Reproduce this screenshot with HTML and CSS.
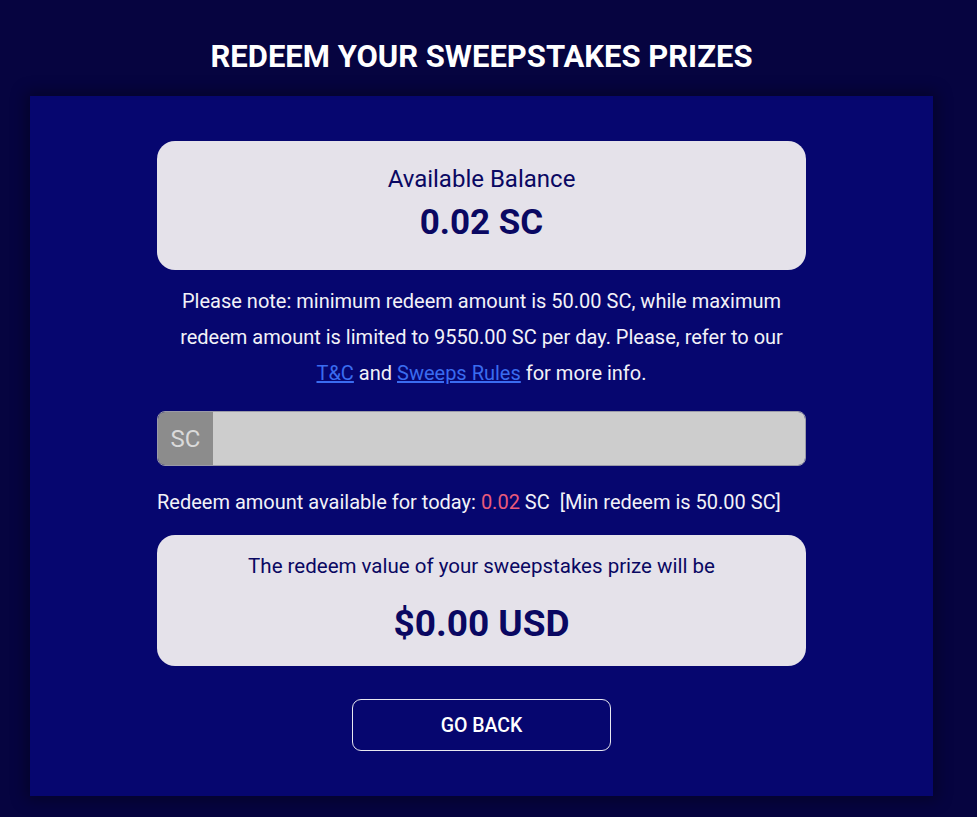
FILE: index.html
```html
<!DOCTYPE html>
<html lang="en">
<head>
    <meta charset="UTF-8">
    <meta name="viewport" content="width=device-width, initial-scale=1.0">
    <title>Redeem Your Sweepstakes Prizes</title>
    <link rel="stylesheet" href="styles.css">
</head>
<body>
    <div class="redeem-page">
        <h1 class="page-title">REDEEM YOUR SWEEPSTAKES PRIZES</h1>

        <div class="redeem-panel">
            <div class="redeem-content">
                <div class="info-card balance-card">
                    <p class="card-label">Available Balance</p>
                    <p class="card-value">0.02 SC</p>
                </div>

                <p class="redeem-note">
                    Please note: minimum redeem amount is 50.00 SC, while maximum<br>
                    redeem amount is limited to 9550.00 SC per day. Please, refer to our<br>
                    <a href="#">T&amp;C</a> and <a href="#">Sweeps Rules</a> for more info.
                </p>

                <div class="amount-field">
                    <span class="amount-prefix">SC</span>
                    <input type="text" class="amount-input" disabled>
                </div>

                <p class="redeem-limit">
                    Redeem amount available for today: <span class="limit-value">0.02</span> SC&nbsp; [Min redeem is 50.00 SC]
                </p>

                <div class="info-card value-card">
                    <p class="card-label small">The redeem value of your sweepstakes prize will be</p>
                    <p class="card-value large">$0.00 USD</p>
                </div>

                <button class="back-button">GO BACK</button>
            </div>
        </div>
    </div>
</body>
</html>
```

FILE: styles.css
```css
* {
    margin: 0;
    padding: 0;
    box-sizing: border-box;
}

body {
    font-family: Roboto, 'Noto Sans', sans-serif;
    background: #060440;
    color: #f2f2f8;
    min-height: 100vh;
}

.redeem-page {
    padding: 38px 44px 20px 30px;
}

.page-title {
    text-align: center;
    font-size: 31px;
    font-weight: 700;
    color: #ffffff;
    line-height: 38px;
    margin-bottom: 20px;
}

.redeem-panel {
    background: #06066f;
    box-shadow: 0 0 14px 4px rgba(0, 0, 0, 0.35);
    height: 700px;
    padding-top: 45px;
}

.redeem-content {
    width: 649px;
    margin: 0 auto;
    display: flex;
    flex-direction: column;
    align-items: stretch;
}

.info-card {
    background: #e5e2ea;
    color: #0a0862;
    border-radius: 18px;
    text-align: center;
}

.balance-card {
    height: 129px;
    padding-top: 24px;
}

.card-label {
    font-size: 24px;
    line-height: 28px;
}

.card-label.small {
    font-size: 20.5px;
    line-height: 24px;
}

.card-value {
    font-size: 35px;
    font-weight: 700;
    line-height: 42px;
    margin-top: 9px;
}

.card-value.large {
    font-size: 37px;
    line-height: 44px;
    margin-top: 24px;
}

.redeem-note {
    text-align: center;
    font-size: 20px;
    line-height: 36px;
    margin: 13px 0 20px;
    white-space: nowrap;
}

.redeem-note a {
    color: #3a6cf0;
}

.amount-field {
    display: flex;
    height: 55px;
    border-radius: 8px;
    overflow: hidden;
    border: 1px solid #9a9aa8;
}

.amount-prefix {
    width: 55px;
    background: #8c8c8c;
    color: #dadada;
    font-size: 24px;
    display: flex;
    align-items: center;
    justify-content: center;
}

.amount-input {
    flex: 1;
    border: none;
    background: #cdcdcd;
    outline: none;
}

.redeem-limit {
    font-size: 20px;
    line-height: 36px;
    margin: 18px 0 15px;
    white-space: nowrap;
}

.limit-value {
    color: #ea5a7a;
}

.value-card {
    height: 131px;
    padding-top: 19px;
}

.back-button {
    align-self: center;
    width: 259px;
    height: 52px;
    margin-top: 33px;
    background: transparent;
    border: 1px solid #e8e8f0;
    border-radius: 9px;
    color: #ffffff;
    font-family: inherit;
    font-size: 19.5px;
    font-weight: 500;
}
```
